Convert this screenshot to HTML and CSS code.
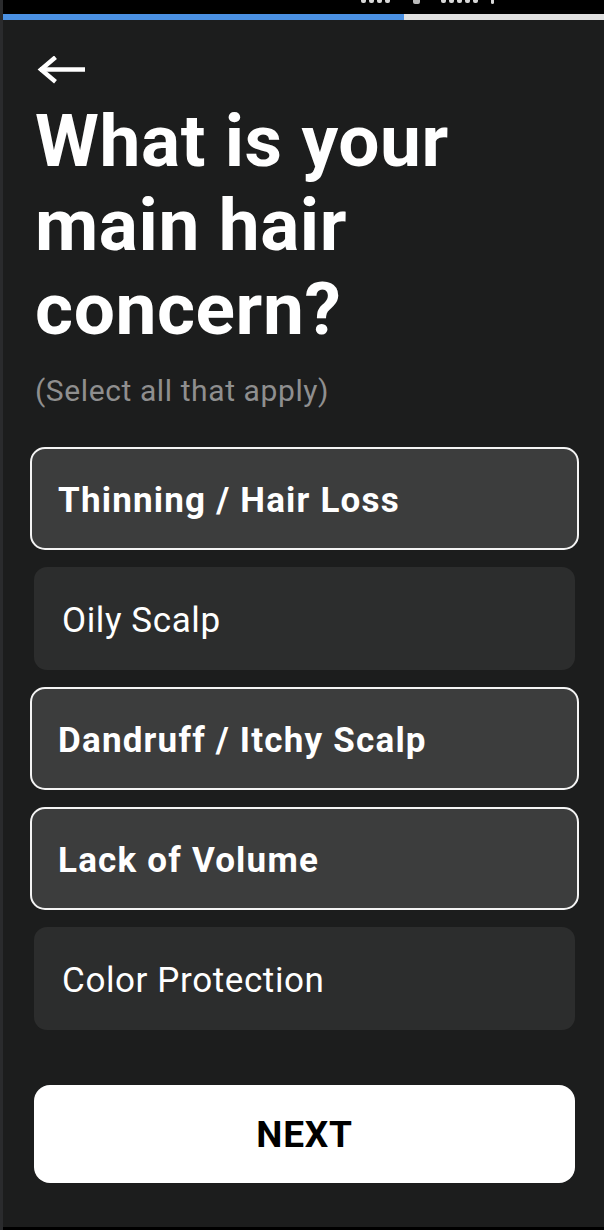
FILE: index.html
```html
<!DOCTYPE html>
<html lang="en">
<head>
<meta charset="utf-8">
<title>Hair concern</title>
<link rel="stylesheet" href="styles.css">
</head>
<body>
<div class="frame">
  <div class="edge"></div>
  <div class="screen">
    <div class="statusbar">
      <div class="status-items">
        <i class="tick t1"></i><i class="tick t2"></i><i class="tick t3"></i><i class="tick t4"></i>
        <i class="tick t5"></i>
        <i class="tick t6"></i><i class="tick t7"></i><i class="tick t8"></i><i class="tick t9"></i><i class="tick t10"></i>
        <i class="tick t11"></i>
      </div>
    </div>
    <div class="progress"><div class="progress-fill" style="width: 401px"></div></div>
    <main class="content">
      <button class="back" aria-label="Back">
        <svg width="48" height="28" viewBox="0 0 48 28">
          <path d="M3 13.5 H48" stroke="#fff" stroke-width="4.6" fill="none"/>
          <path d="M18.5 1.2 L4 13.5 L18.5 25.8" stroke="#fff" stroke-width="4.4" fill="none" stroke-linejoin="miter"/>
        </svg>
      </button>
      <h1 class="title">What is your main hair concern?</h1>
      <p class="subtitle">(Select all that apply)</p>
      <ul class="options">
        <li class="option selected">Thinning / Hair Loss</li>
        <li class="option">Oily Scalp</li>
        <li class="option selected">Dandruff / Itchy Scalp</li>
        <li class="option selected">Lack of Volume</li>
        <li class="option">Color Protection</li>
      </ul>
      <button class="next">NEXT</button>
    </main>
    <div class="bottombar"></div>
  </div>
</div>
</body>
</html>
```

FILE: styles.css
```css
* { box-sizing: border-box; }
html, body { margin: 0; padding: 0; }
body {
  background: #1c1d1d;
  font-family: Roboto, "Liberation Sans", Arial, sans-serif;
  color: #fff;
  width: 604px;
  height: 1230px;
  overflow: hidden;
}
.frame {
  display: flex;
  height: 1230px;
}
.edge {
  width: 3px;
  background: #2a2b2d;
  flex: none;
}
.screen {
  flex: 1;
  display: flex;
  flex-direction: column;
  min-width: 0;
}
.statusbar {
  height: 14px;
  background: #000;
  flex: none;
}
.status-items {
  display: flex;
  align-items: flex-start;
  gap: 3px;
  padding-left: 358px;
  height: 4px;
}
.tick {
  display: block;
  width: 5px;
  height: 3px;
  background: #d8d8d8;
  border-radius: 0 0 2px 2px;
}
.t5 { margin-left: 20px; width: 7px; height: 4px; background: #bbb; }
.t6 { margin-left: 18px; }
.t10 { margin-right: 0; }
.t11 { margin-left: 10px; width: 3px; height: 4px; }
.progress {
  height: 6px;
  background: #e0e0e0;
  flex: none;
}
.progress-fill {
  height: 6px;
  background: #4a90e2;
}
.content {
  flex: 1;
  display: flex;
  flex-direction: column;
  padding: 36px 26px 0 31px;
}
.back {
  align-self: flex-start;
  background: none;
  border: 0;
  padding: 0;
  margin: 0 0 0 3px;
  height: 28px;
  display: block;
  cursor: pointer;
}
.back svg { display: block; }
.title {
  margin: 15px 0 0 1px;
  font-size: 73px;
  line-height: 84px;
  font-weight: 700;
  letter-spacing: 0.6px;
  width: 470px;
}
.subtitle {
  margin: 22px 0 0 1px;
  font-size: 30px;
  line-height: 36px;
  font-weight: 400;
  letter-spacing: 0.6px;
  color: #8f8f8f;
}
.options {
  list-style: none;
  margin: 38px 0 0 0;
  padding: 0;
  display: flex;
  flex-direction: column;
  gap: 17px;
  width: 541px;
}
.option {
  height: 103px;
  display: flex;
  align-items: center;
  padding: 4px 28px 0 28px;
  border-radius: 13px;
  background: #2c2d2d;
  font-size: 35px;
  font-weight: 400;
  letter-spacing: 0.6px;
}
.option.selected {
  margin: 0 -4px;
  padding-left: 26px;
  border: 2px solid #f4f4f4;
  border-radius: 15px;
  background: #3c3d3d;
  font-weight: 700;
  letter-spacing: 1.2px;
}
.next {
  margin-top: 55px;
  width: 541px;
  height: 98px;
  border: 0;
  border-radius: 16px;
  background: #fff;
  color: #000;
  font-family: Roboto, "Liberation Sans", Arial, sans-serif;
  font-size: 37px;
  font-weight: 700;
  letter-spacing: 0.8px;
  display: flex;
  align-items: center;
  justify-content: center;
  padding: 0;
}
.bottombar {
  height: 3px;
  background: #000;
  flex: none;
}
```
